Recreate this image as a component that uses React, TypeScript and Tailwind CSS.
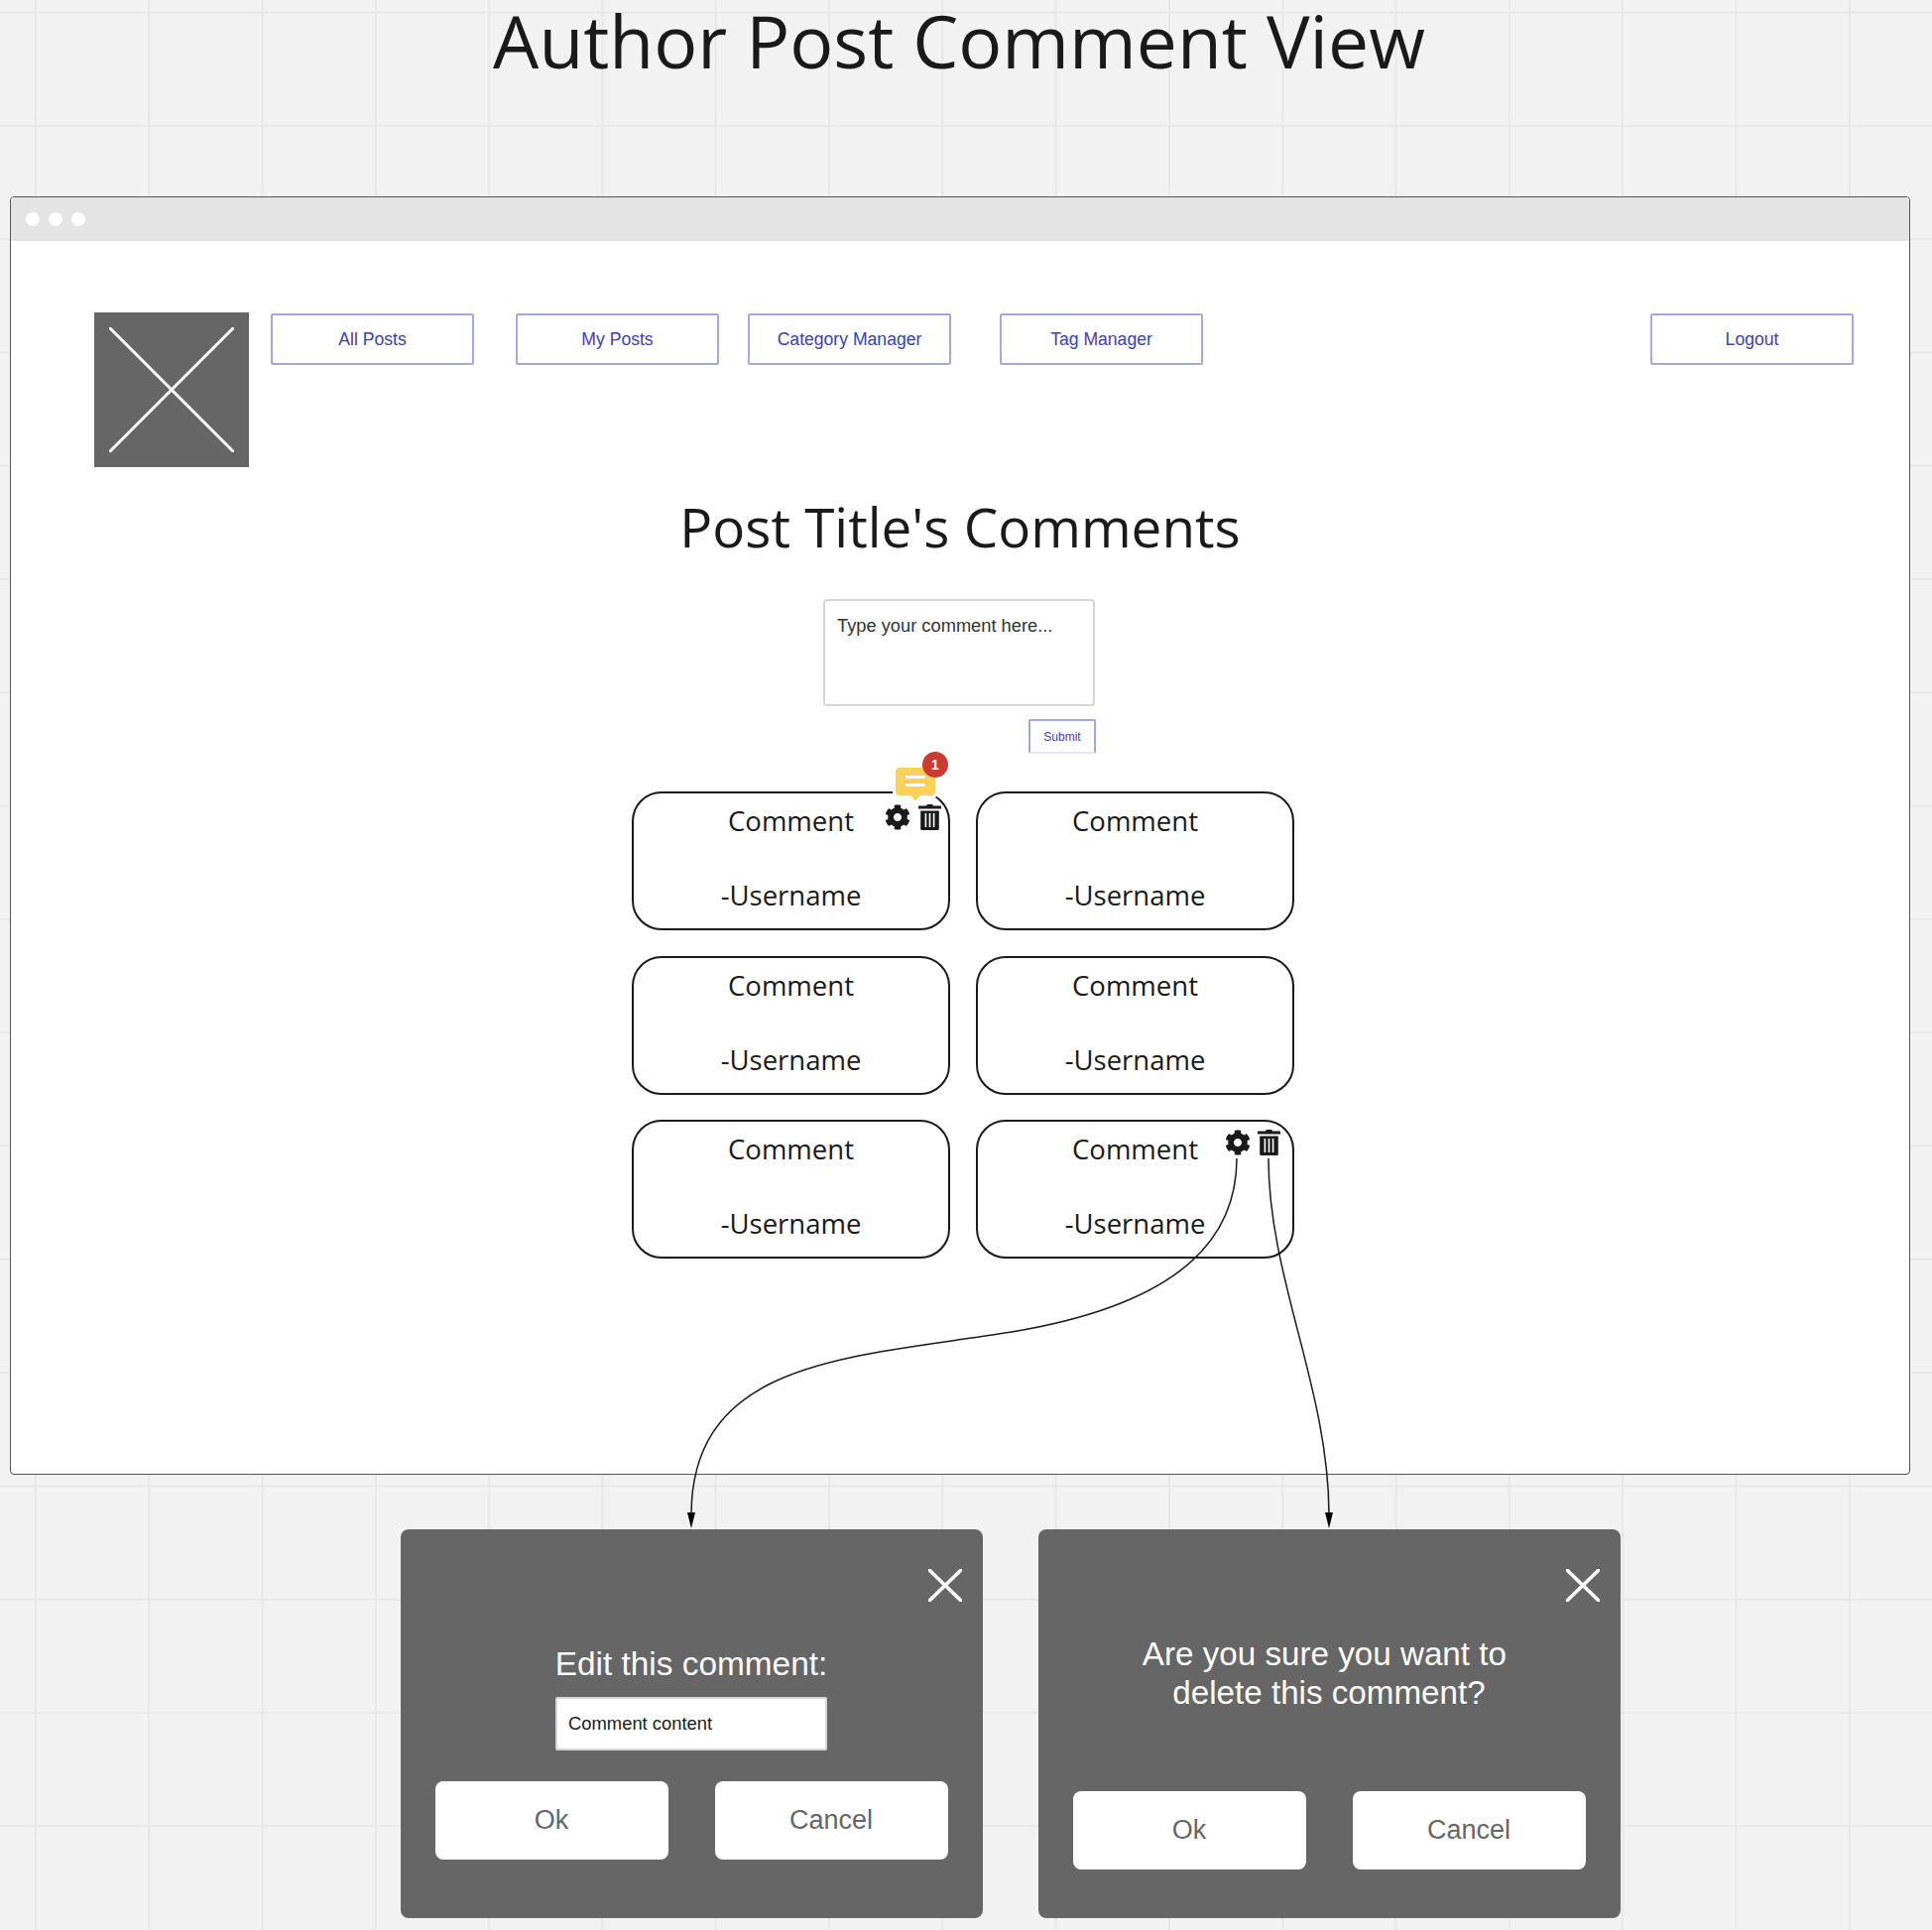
import { FaCog } from 'react-icons/fa';

const navFont = "font-['Liberation_Sans',Arial,sans-serif]";

const NavButton = ({ label, className }: { label: string; className: string }) => (
  <div className={`${className} ${navFont} w-[205px] h-[52px] flex items-center justify-center border-2 border-[#a3a9dd] rounded-[2px] text-[17.6px] text-[#3a43ad]`}>
    {label}
  </div>
);

const TrashIcon = ({ className }: { className: string }) => (
  <svg viewBox="0 0 23 26" className={className}>
    <path d="M8 1.6 C8 .6 9 0 10 0 H13 C14 0 15 .6 15 1.6 H22 C22.6 1.6 23 2 23 2.6 V4.6 H0 V2.6 C0 2 .4 1.6 1 1.6 Z" fill="#1a1a1a" />
    <path d="M2.2 6.4 H20.8 V24.4 C20.8 25.3 20.1 26 19.2 26 H3.8 C2.9 26 2.2 25.3 2.2 24.4 Z" fill="#1a1a1a" />
    <rect x="6.6" y="9" width="1.6" height="14" fill="#fff" />
    <rect x="10.7" y="9" width="1.6" height="14" fill="#fff" />
    <rect x="14.8" y="9" width="1.6" height="14" fill="#fff" />
  </svg>
);

const CloseIcon = ({ className, stroke }: { className: string; stroke: number }) => (
  <svg viewBox="0 0 100 100" preserveAspectRatio="none" className={className}>
    <path d="M0 0 L100 100 M100 0 L0 100" stroke="#fff" strokeWidth={stroke} fill="none" vectorEffect="non-scaling-stroke" />
  </svg>
);

const CommentCard = ({ children }: { children?: React.ReactNode }) => (
  <div className="relative h-[140px] border-[2.5px] border-[#1a1a1a] rounded-[30px] bg-white flex flex-col items-center pt-[8px] font-['Open_Sans',sans-serif] text-[27.5px] leading-[40px] text-[#1a1a1a]">
    <span>Comment</span>
    <span className="mt-[35px]">-Username</span>
    {children}
  </div>
);

const ModalButton = ({ label }: { label: string }) => (
  <div className="w-[235px] h-[79px] bg-white rounded-[8px] flex items-center justify-center text-[27px] text-[#666666]">
    {label}
  </div>
);

export default function App() {
  return (
    <div className="relative w-[1948px] h-[1946px] overflow-hidden bg-[#f2f2f2] bg-[linear-gradient(to_right,#e8e8e8_2px,transparent_2px),linear-gradient(to_bottom,#e8e8e8_2px,transparent_2px)] bg-[size:114.3px_114.3px] bg-[position:35px_11.5px]">
      <h1 className="h-[198px] pr-[14px] text-center font-['Open_Sans',sans-serif] text-[73.2px] leading-[82px] text-[#1a1a1a]">
        Author Post Comment View
      </h1>

      {/* browser frame */}
      <div className="ml-[10px] w-[1916px] h-[1289px] border-[1.5px] border-[#555555] rounded-[4px] bg-white flex flex-col overflow-hidden">
        <div className="h-[44px] shrink-0 bg-[#e4e4e4] flex items-center gap-[9px] pl-[15px]">
          <span className="w-[14px] h-[14px] rounded-full bg-white" />
          <span className="w-[14px] h-[14px] rounded-full bg-white" />
          <span className="w-[14px] h-[14px] rounded-full bg-white" />
        </div>

        <div className="flex items-start pl-[84px] pr-[56px] pt-[72px]">
          <div className="w-[156px] h-[156px] bg-[#666666] p-[15px] shrink-0">
            <CloseIcon className="w-full h-full" stroke={3} />
          </div>
          <NavButton label="All Posts" className="ml-[22px] mt-[1px]" />
          <NavButton label="My Posts" className="ml-[42px] mt-[1px]" />
          <NavButton label="Category Manager" className="ml-[29px] mt-[1px]" />
          <NavButton label="Tag Manager" className="ml-[49px] mt-[1px]" />
          <NavButton label="Logout" className="ml-auto mt-[1px]" />
        </div>

        <div className="flex flex-col items-center pr-[2px]">
          <h2 className="mt-[24px] ml-[2px] font-['Open_Sans',sans-serif] text-[54.8px] leading-[72px] text-[#1a1a1a]">
            Post Title's Comments
          </h2>
          <div className={`${navFont} mt-[37px] w-[274px] h-[108px] border-2 border-[#d6d6d6] rounded-[4px] px-[12px] pt-[13px] text-[18.3px] leading-[24px] text-[#333333]`}>
            Type your comment here...
          </div>
          <div className={`${navFont} self-end mr-[818px] mt-[13px] w-[68px] h-[35px] border-2 border-[#a3a9dd] border-b-[#e4e6f5] rounded-[2px] flex items-center justify-center text-[12px] text-[#3a43ad]`}>
            Submit
          </div>

          <div className="mt-[38px] ml-[8px] w-[668px] grid grid-cols-[321px_321px] gap-x-[26px] gap-y-[25.5px]">
            <CommentCard>
              <FaCog className="absolute left-[253px] top-[11px] w-[26px] h-[26px] text-[#1a1a1a]" />
              <TrashIcon className="absolute left-[287px] top-[11px] w-[23px] h-[26px]" />
              {/* notification sticker */}
              <svg viewBox="0 0 46 39" className="absolute left-[261px] top-[-29px] w-[46px] h-[39px]">
                <path d="M6 0 H40 C43.3 0 46 2.7 46 6 V28 C46 31.3 43.3 34 40 34 H28 L23 39 L18 34 H6 C2.7 34 0 31.3 0 28 V6 C0 2.7 2.7 0 6 0 Z" fill="#fff" />
                <path d="M7 3 H39 C41.2 3 43 4.8 43 7 V27 C43 29.2 41.2 31 39 31 H27.5 L23 37 L18.5 31 H7 C4.8 31 3 29.2 3 27 V7 C3 4.8 4.8 3 7 3 Z" fill="#fbd257" />
                <rect x="13" y="11" width="20" height="3" rx="1.5" fill="#fff" />
                <rect x="13" y="19" width="20" height="3" rx="1.5" fill="#fff" />
              </svg>
              <div className={`${navFont} absolute left-[291px] top-[-42px] w-[26px] h-[26px] rounded-full bg-[#cc3a33] flex items-center justify-center text-[14px] font-bold leading-none text-white`}>
                1
              </div>
            </CommentCard>
            <CommentCard />
            <CommentCard />
            <CommentCard />
            <CommentCard />
            <CommentCard>
              <FaCog className="absolute left-[249px] top-[8px] w-[26px] h-[26px] text-[#1a1a1a]" />
              <TrashIcon className="absolute left-[282px] top-[8px] w-[23px] h-[26px]" />
            </CommentCard>
          </div>
        </div>
      </div>

      {/* modals */}
      <div className={`${navFont} flex gap-[56px] mt-[55px] ml-[403.5px]`}>
        <div className="w-[587px] h-[392px] bg-[#666666] rounded-[8px] flex flex-col items-center">
          <div className="self-end mt-[40px] mr-[21px]">
            <CloseIcon className="w-[34px] h-[33px]" stroke={3.5} />
          </div>
          <div className="mt-[43px] text-[33.4px] leading-[40px] text-white">Edit this comment:</div>
          <div className="mt-[13px] w-[274px] h-[54px] bg-white border-2 border-[#d6d6d6] rounded-[2px] flex items-center px-[11px] text-[18.4px] text-[#1a1a1a]">
            Comment content
          </div>
          <div className="mt-[31px] flex gap-[47px]">
            <ModalButton label="Ok" />
            <ModalButton label="Cancel" />
          </div>
        </div>

        <div className="w-[587px] h-[392px] bg-[#666666] rounded-[8px] flex flex-col items-center">
          <div className="self-end mt-[40px] mr-[21px]">
            <CloseIcon className="w-[34px] h-[33px]" stroke={3.5} />
          </div>
          <div className="mt-[33px] text-center text-[33.2px] leading-[39px] text-white">
            Are you sure you want to{'\u00a0'}
            <br />
            delete this comment?
          </div>
          <div className="mt-[80px] flex gap-[47px]">
            <ModalButton label="Ok" />
            <ModalButton label="Cancel" />
          </div>
        </div>
      </div>

      {/* connectors drawn over the board */}
      <svg viewBox="0 0 1948 1946" className="absolute inset-0 w-[1948px] h-[1946px] pointer-events-none">
        <path d="M1247 1168 C1247 1262 1170 1318 1020 1343 C860 1369 697 1369 697 1528" stroke="#1a1a1a" strokeWidth="1.5" fill="none" />
        <path d="M697 1541 L693 1525 L701 1525 Z" fill="#000" />
        <path d="M1279 1168 C1279 1290 1340 1400 1340 1528" stroke="#1a1a1a" strokeWidth="1.5" fill="none" />
        <path d="M1340 1541 L1336 1525 L1344 1525 Z" fill="#000" />
      </svg>
    </div>
  );
}
